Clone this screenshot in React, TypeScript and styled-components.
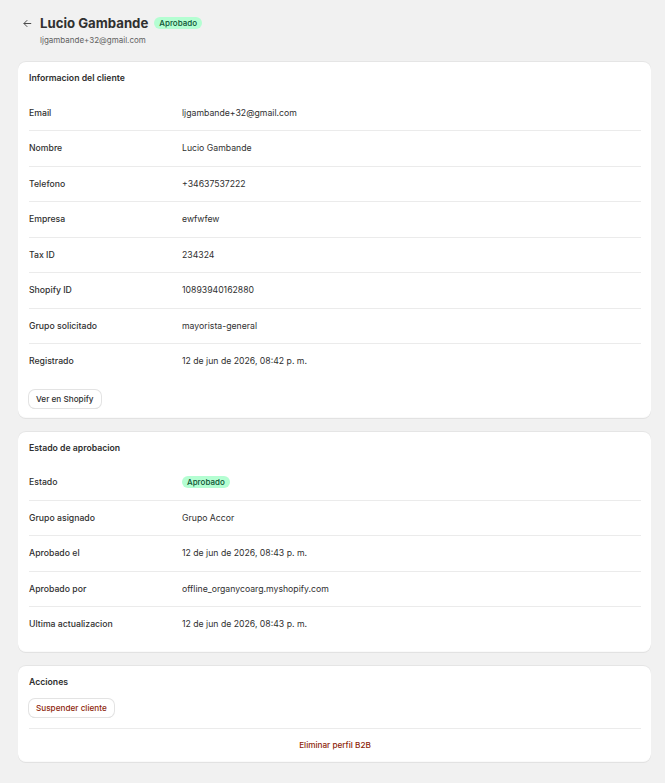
import React from 'react';
import styled, { createGlobalStyle } from 'styled-components';

interface Field {
    label: string;
    value: React.ReactNode;
}

const clientFields: Field[] = [
    { label: 'Email', value: 'ljgambande+32@gmail.com' },
    { label: 'Nombre', value: 'Lucio Gambande' },
    { label: 'Telefono', value: '+34637537222' },
    { label: 'Empresa', value: 'ewfwfew' },
    { label: 'Tax ID', value: '234324' },
    { label: 'Shopify ID', value: '10893940162880' },
    { label: 'Grupo solicitado', value: 'mayorista-general' },
    { label: 'Registrado', value: '12 de jun de 2026, 08:42 p. m.' },
];

function FieldList({ fields }: { fields: Field[] }) {
    return (
        <List>
            {fields.map((f) => (
                <Row key={f.label}>
                    <Label>{f.label}</Label>
                    <Value>{f.value}</Value>
                </Row>
            ))}
        </List>
    );
}

export default function App() {
    const approvalFields: Field[] = [
        { label: 'Estado', value: <Badge>Aprobado</Badge> },
        { label: 'Grupo asignado', value: 'Grupo Accor' },
        { label: 'Aprobado el', value: '12 de jun de 2026, 08:43 p. m.' },
        { label: 'Aprobado por', value: 'offline_organycoarg.myshopify.com' },
        { label: 'Ultima actualizacion', value: '12 de jun de 2026, 08:43 p. m.' },
    ];

    return (
        <>
            <GlobalStyle />
            <Page>
                <Header>
                    <BackButton aria-label="Volver">
                        <svg width="11" height="11" viewBox="0 0 20 20" fill="none">
                            <path d="M16 10H4M9 4.5 3.5 10 9 15.5" stroke="#4a4a4a" strokeWidth="1.8" strokeLinecap="round" strokeLinejoin="round" />
                        </svg>
                    </BackButton>
                    <HeaderText>
                        <TitleRow>
                            <Title>Lucio Gambande</Title>
                            <Badge>Aprobado</Badge>
                        </TitleRow>
                        <Subtitle>ljgambande+32@gmail.com</Subtitle>
                    </HeaderText>
                </Header>

                <Card>
                    <CardTitle>Informacion del cliente</CardTitle>
                    <FieldList fields={clientFields} />
                    <div>
                        <Button>Ver en Shopify</Button>
                    </div>
                </Card>

                <Card>
                    <CardTitle>Estado de aprobacion</CardTitle>
                    <FieldList fields={approvalFields} />
                </Card>

                <Card>
                    <CardTitle>Acciones</CardTitle>
                    <div>
                        <Button $danger>Suspender cliente</Button>
                    </div>
                    <DangerZone>
                        <PlainButton>Eliminar perfil B2B</PlainButton>
                    </DangerZone>
                </Card>
            </Page>
        </>
    );
}

const GlobalStyle = createGlobalStyle`
    body {
        margin: 0;
        background: #f1f1f1;
        font-family: Inter, "Noto Sans", sans-serif;
        color: #303030;
    }
`;

const Page = styled.div`
    display: flex;
    flex-direction: column;
    gap: 13px;
    padding: 14px 14px 21px 18px;
`;

const Header = styled.div`
    display: flex;
    align-items: flex-start;
    gap: 7px;
    padding-left: 3px;
    margin-bottom: 2px;
`;

const BackButton = styled.button`
    border: none;
    background: none;
    padding: 0;
    margin-top: 3px;
    width: 12px;
    height: 12px;
    display: flex;
    align-items: center;
    justify-content: center;
    cursor: pointer;
`;

const HeaderText = styled.div`
    display: flex;
    flex-direction: column;
    gap: 3px;
`;

const TitleRow = styled.div`
    display: flex;
    align-items: center;
    gap: 6px;
`;

const Title = styled.h1`
    margin: 0;
    font-size: 13.2px;
    line-height: 18px;
    font-weight: 700;
    color: #303030;
`;

const Subtitle = styled.div`
    font-size: 8px;
    line-height: 11px;
    color: #616161;
`;

const Badge = styled.span`
    display: inline-flex;
    align-items: center;
    height: 12px;
    padding: 0 5px;
    border-radius: 6px;
    background: #b4fed2;
    color: #0c5132;
    font-size: 8px;
    font-weight: 500;
`;

const Card = styled.section`
    background: #fff;
    border-radius: 8px;
    box-shadow: 0 1px 0 0 rgba(26, 26, 26, 0.07), 0 1px 0 0 rgba(204, 204, 204, 0.5) inset, 0 -1px 0 0 rgba(0, 0, 0, 0.02) inset;
    padding: 10px 10px 10px 11px;
    display: flex;
    flex-direction: column;
`;

const CardTitle = styled.h2`
    margin: 0;
    padding-top: 1px;
    font-size: 8.7px;
    line-height: 12px;
    font-weight: 600;
    color: #303030;
`;

const List = styled.div`
    display: flex;
    flex-direction: column;
    margin-top: 11.5px;
`;

const Row = styled.div`
    display: grid;
    grid-template-columns: 153px 1fr;
    align-items: center;
    min-height: 34.5px;
    font-size: 8.7px;
    & + & {
        border-top: 1px solid #ebebeb;
    }
`;

const Label = styled.div`
    font-weight: 550;
    color: #303030;
`;

const Value = styled.div`
    color: #303030;
`;

const Button = styled.button<{ $danger?: boolean }>`
    height: 18px;
    padding: 0 7px;
    border-radius: 6px;
    background: #fff;
    border: none;
    box-shadow: 0 0 0 1px #e3e3e3, 0 1px 0 0 #d4d4d4;
    font-family: inherit;
    font-size: 8.2px;
    font-weight: 500;
    color: ${(p) => (p.$danger ? '#8e1f0b' : '#303030')};
    cursor: pointer;
    margin-top: 11px;
`;

const DangerZone = styled.div`
    margin-top: 11px;
    border-top: 1px solid #ebebeb;
    display: flex;
    justify-content: center;
    padding-top: 11px;
    padding-bottom: 1px;
`;

const PlainButton = styled.button`
    border: none;
    background: none;
    padding: 0;
    font-family: inherit;
    font-size: 8.2px;
    line-height: 11px;
    font-weight: 500;
    color: #8e1f0b;
    cursor: pointer;
`;
